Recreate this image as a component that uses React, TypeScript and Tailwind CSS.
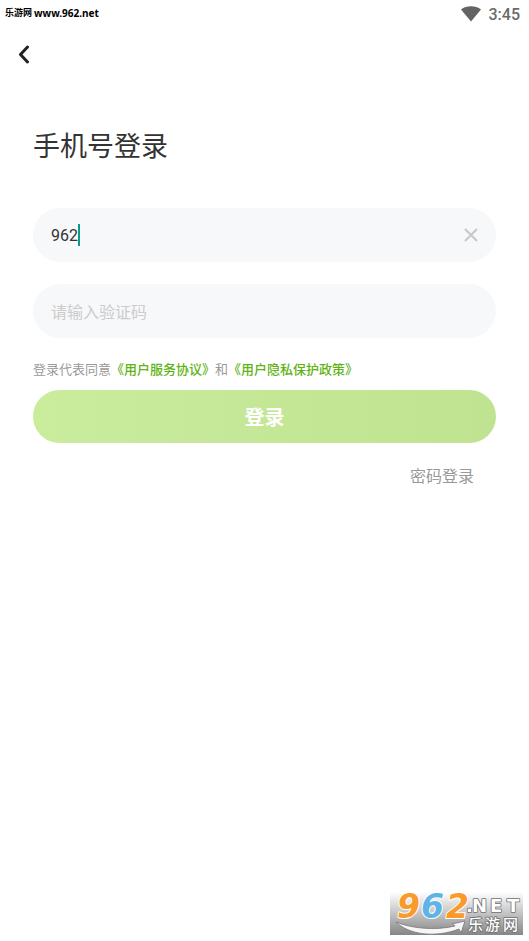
import React, { useState } from 'react';

const StatusBar: React.FC = () => (
  <div className="flex h-7 items-center justify-between pl-[5px] pr-[9px]">
    <span className="flex items-center gap-0.5 leading-4 text-black">
      <span className="pb-0.5 text-[9px] font-bold font-['Noto_Sans_CJK_SC',sans-serif]">乐游网</span>
      <span className="pb-0.5 text-[10px] font-bold font-['Noto_Sans',sans-serif]">www.962.net</span>
    </span>
    <div className="flex items-center gap-2">
      <svg className="h-4 w-5" viewBox="0 0 20 16" fill="#646464" aria-hidden="true">
        <path d="M0 3.500C2.800 1.300 6.200.2 10 .2s7.200 1.100 10 3.300L10 15.500Z" />
      </svg>
      <span className="pt-0.5 text-base font-medium leading-7 text-[#6a6a6a] font-['Roboto',sans-serif]">3:45</span>
    </div>
  </div>
);

const Watermark: React.FC = () => (
  <div className="absolute bottom-1.5 right-1.5 h-[43px] w-[133px] bg-linear-to-b from-white via-[#c4c4c4] to-[#868686]">
    <svg viewBox="0 0 133 43" className="h-full w-full overflow-visible" role="img" aria-label="962.NET 乐游网">
      <path
        d="M6 30C20 36 44 39 65 34L62 32L75 29L71 41L69 37C46 46 19 43 6 30Z"
        fill="#f6f6f6"
        stroke="#777777"
        strokeWidth="0.8"
      />
      <g
        fontFamily="DejaVu Sans, sans-serif"
        fontWeight="700"
        fontStyle="italic"
        fontSize="33"
        stroke="#ffffff"
        strokeWidth="2"
        strokeLinejoin="round"
        paintOrder="stroke"
      >
        <text x="7" y="26" fill="#f99a2b">9</text>
        <text x="31" y="26" fill="#5fb4e6">6</text>
        <text x="56" y="26" fill="#f99a2b">2</text>
      </g>
      <g fill="#ffffff" stroke="#707070" strokeWidth="1.6" strokeLinejoin="round" paintOrder="stroke">
        <g fontFamily="DejaVu Sans, sans-serif" fontWeight="700" fontSize="18">
          <text x="76" y="20">.</text>
          <text x="82" y="20">N</text>
          <text x="100" y="20">E</text>
          <text x="117" y="20">T</text>
        </g>
        <g fontFamily="Noto Sans CJK SC, sans-serif" fontWeight="500" fontSize="15">
          <text x="78" y="38">乐</text>
          <text x="95" y="38">游</text>
          <text x="113" y="38">网</text>
        </g>
      </g>
    </svg>
  </div>
);

const App: React.FC = () => {
  const [phone, setPhone] = useState('962');
  const [code, setCode] = useState('');

  return (
    <div className="relative min-h-screen bg-white text-[#333333] font-['Roboto','Noto_Sans_CJK_SC',sans-serif]">
      <StatusBar />

      <header className="flex h-[52px] items-center px-4">
        <button type="button" aria-label="返回" className="flex h-6 w-4 items-center justify-center">
          <svg className="h-5 w-4" viewBox="0 0 16 20" fill="none" stroke="#222222" strokeWidth="3" strokeLinecap="round" strokeLinejoin="round">
            <path d="M11.500 3L4.500 10.500L11.500 18" />
          </svg>
        </button>
      </header>

      <main className="px-[33px] pt-[47px]">
        <h1 className="text-[27px] leading-10">手机号登录</h1>

        <form className="mt-[41px]" onSubmit={(e) => e.preventDefault()}>
          <div className="flex h-[54px] items-center rounded-full bg-[#f6f8fa] px-[18px]">
            <input
              type="tel"
              aria-label="手机号"
              value={phone}
              onChange={(e) => setPhone(e.target.value)}
              className="field-sizing-content bg-transparent pt-0.5 text-base leading-6 caret-transparent outline-none"
            />
            <span className="h-[22px] w-0.5 bg-[#0d9a85]" />
            <button type="button" aria-label="清除" onClick={() => setPhone('')} className="ml-auto">
              <svg className="h-4 w-3.5" viewBox="0 0 14 16" fill="none" stroke="#c8c8c8" strokeWidth="2">
                <path d="M1 2L13 14M13 2L1 14" />
              </svg>
            </button>
          </div>

          <input
            type="text"
            aria-label="验证码"
            placeholder="请输入验证码"
            value={code}
            onChange={(e) => setCode(e.target.value)}
            className="mt-[22px] h-[54px] w-full rounded-full bg-[#f6f8fa] px-[18px] pt-0.5 text-base outline-none placeholder:text-[#cccccc]"
          />

          <p className="mt-[22px] text-[13px] leading-5 text-[#999999]">
            登录代表同意
            <a href="#service" className="font-medium text-[#5fb316]">《用户服务协议》</a>
            和
            <a href="#privacy" className="font-medium text-[#5fb316]">《用户隐私保护政策》</a>
          </p>

          <button
            type="submit"
            className="mt-2.5 h-[53px] w-full rounded-full bg-linear-to-r from-[#caec9d] to-[#bfe391] pt-0.5 text-[20px] font-bold text-white"
          >
            登录
          </button>
        </form>

        <div className="mt-[22px] flex justify-end pr-[22px]">
          <a href="#password" className="text-base leading-6 text-[#999999]">密码登录</a>
        </div>
      </main>

      <Watermark />
    </div>
  );
};

export default App;
